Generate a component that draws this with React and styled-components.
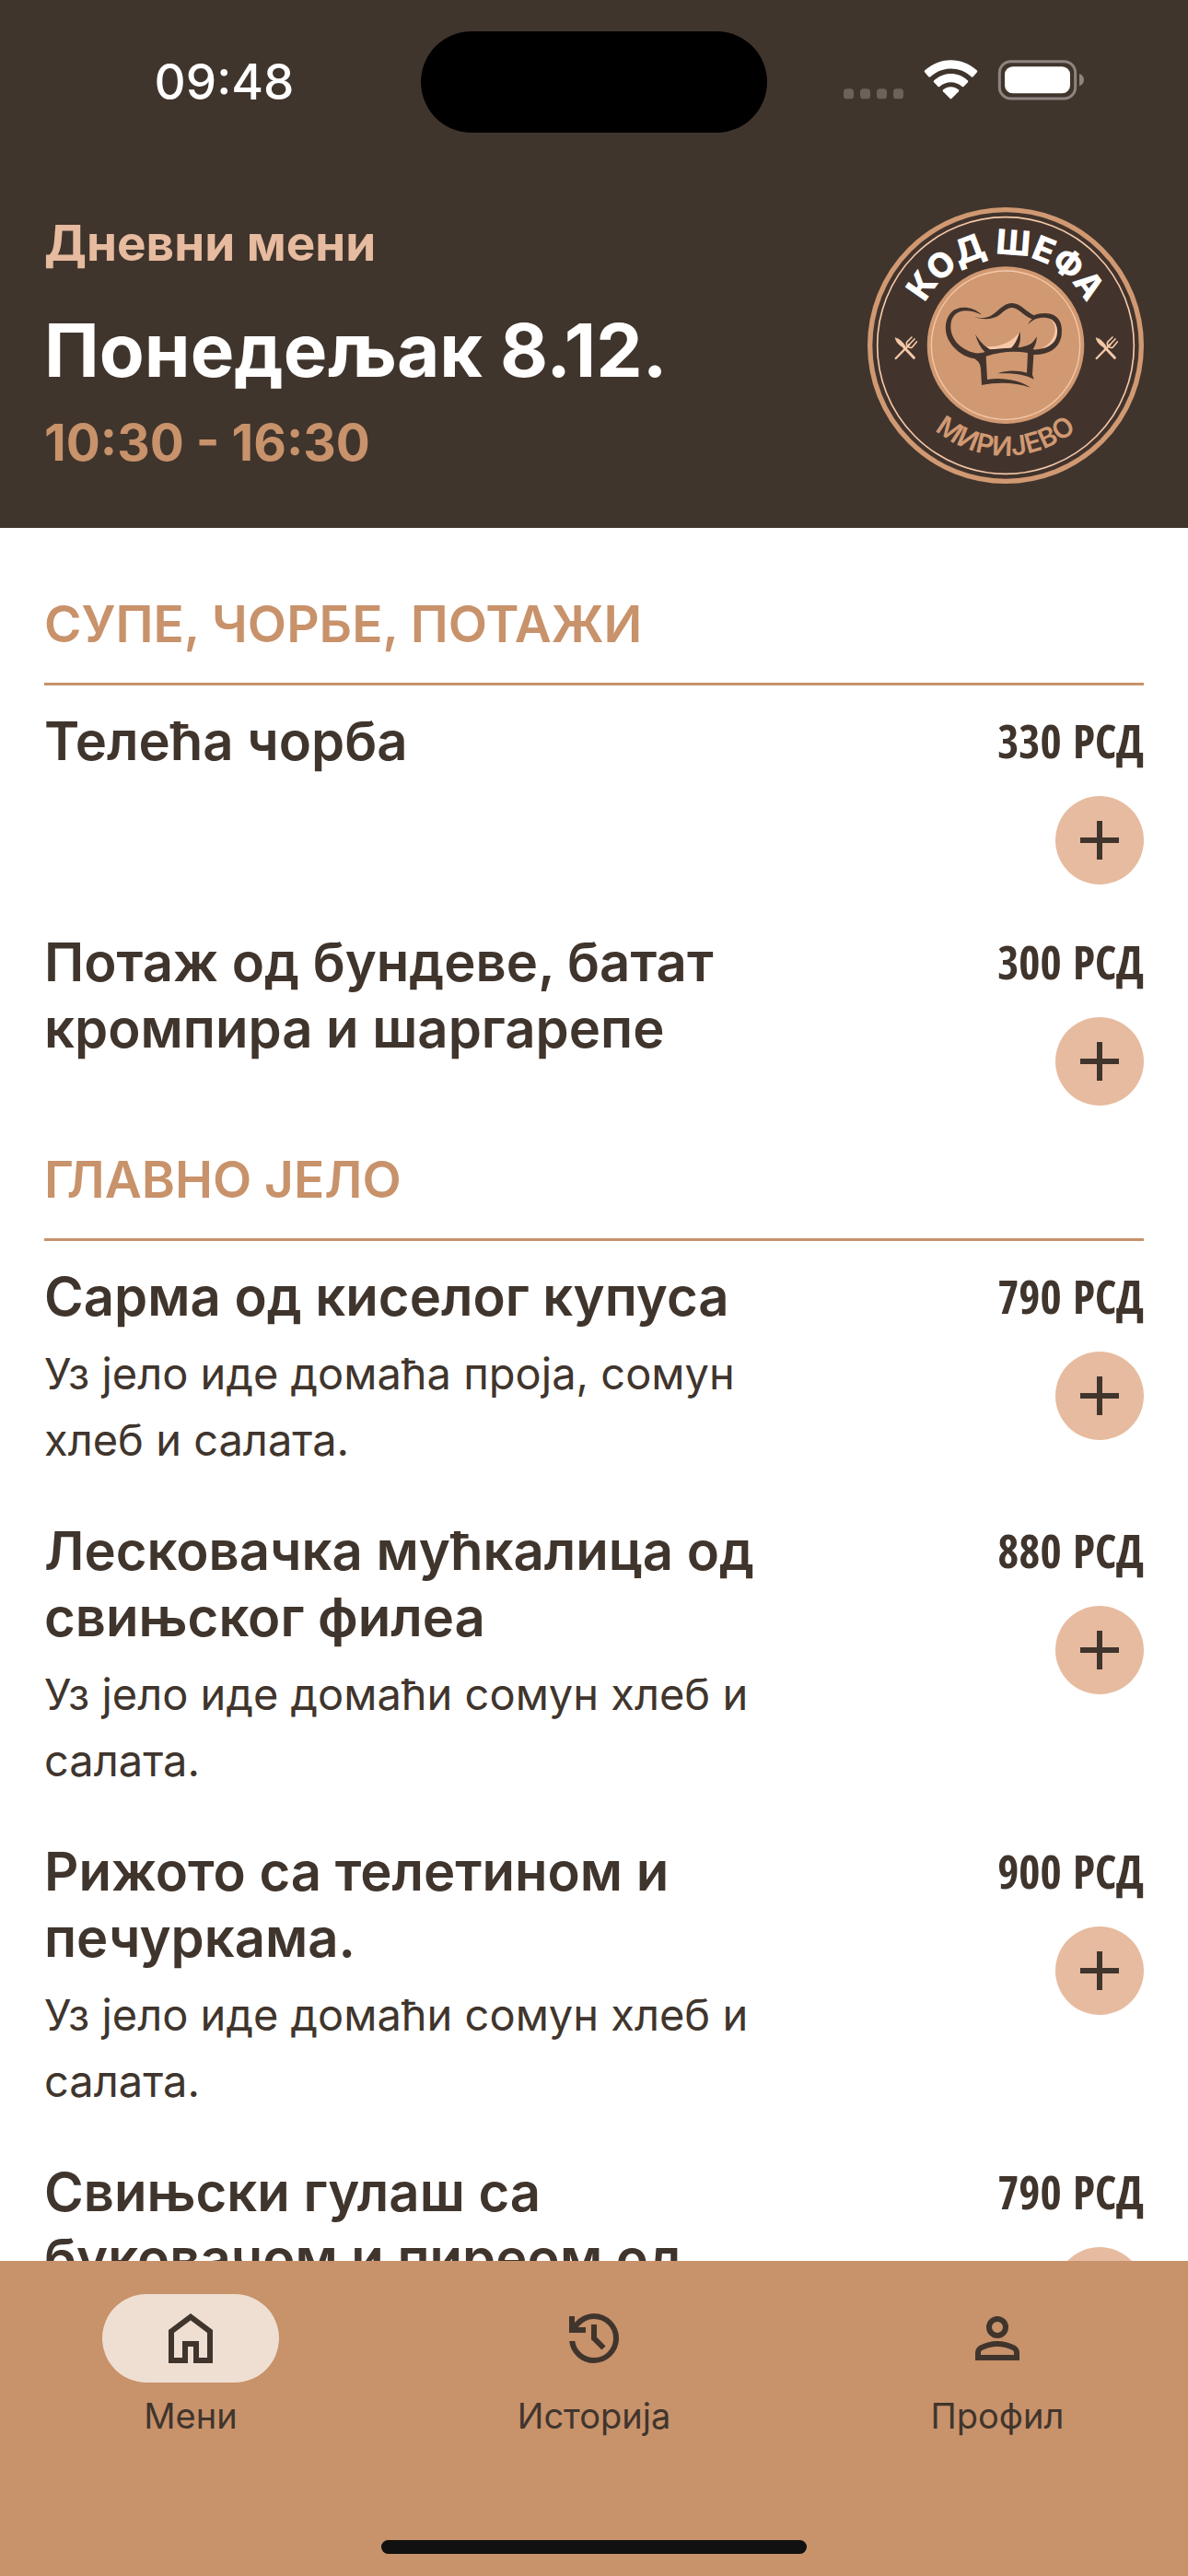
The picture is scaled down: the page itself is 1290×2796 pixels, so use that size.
import React from 'react'
import styled, { createGlobalStyle } from 'styled-components'

const BROWN = '#40352d'
const TAN = '#c8926b'
const PEACH = '#e7bb9f'
const CREAM = '#efdfd2'
const WHITE = '#ffffff'

const FONT = '"Inter", "Noto Sans", sans-serif'
const FONT_NARROW = '"Open Sans Condensed", "Roboto Condensed", "Liberation Sans Narrow", sans-serif'

const GlobalStyle = createGlobalStyle`
  *,
  *::before,
  *::after {
    box-sizing: border-box;
  }

  body {
    margin: 0;
    background: ${WHITE};
    color: ${BROWN};
    font-family: ${FONT};
  }

  h1, h2, h3, p, ul {
    margin: 0;
    padding: 0;
  }
`

const StyledScreen = styled('div')`
  display: flex;
  flex-direction: column;
  height: 100vh;
`

const StyledHeader = styled('header')`
  flex: none;
  background: ${BROWN};
`

const StyledStatusBar = styled('div')`
  display: grid;
  grid-template-columns: 1fr 376px 1fr;
  align-items: center;
  justify-items: center;
  padding-top: 34px;
  color: ${WHITE};
`

const StyledClock = styled('time')`
  padding-left: 30px;
  font-size: 53px;
  font-weight: 500;
  line-height: 72px;
`

const StyledIsland = styled('div')`
  width: 100%;
  height: 110px;
  border-radius: 55px;
  background: #000000;
`

const StyledStatusIcons = styled('svg')`
  width: 262px;
  height: 48px;
  margin: 0 30px 4px 0;
`

const StyledIntro = styled('div')`
  display: flex;
  align-items: center;
  justify-content: space-between;
  padding: 81px 48px 48px;
`

const StyledEyebrow = styled('p')`
  margin-bottom: 24px;
  color: ${PEACH};
  font-size: 53px;
  font-weight: 700;
  line-height: 72px;
`

const StyledDay = styled('h1')`
  margin-bottom: 8px;
  color: ${WHITE};
  font-size: 80px;
  font-weight: 700;
  line-height: 112px;
`

const StyledHours = styled('p')`
  margin-bottom: 6px;
  color: ${TAN};
  font-size: 55px;
  font-weight: 700;
  line-height: 72px;
`

const StyledLogo = styled('svg')`
  flex: none;
  width: 300px;
  height: 300px;
`

const StyledMain = styled('main')`
  flex: 1;
  min-height: 0;
  padding: 24px 48px 0;
  overflow-y: auto;
  scrollbar-width: none;
`

const StyledSectionTitle = styled('h2')`
  padding: 44px 0 28px;
  border-bottom: 3px solid ${TAN};
  color: ${TAN};
  font-size: 55px;
  font-weight: 600;
  line-height: 72px;
`

const StyledDishList = styled('ul')`
  display: flex;
  flex-direction: column;
  gap: 48px;
  padding-top: 24px;
  list-style: none;
`

const StyledDish = styled('li')`
  display: flex;
  align-items: flex-start;
  justify-content: space-between;
`

const StyledDishText = styled('div')`
  flex: 0 0 67%;
`

const StyledDishName = styled('h3')`
  font-size: 58px;
  font-weight: 600;
  line-height: 72px;
`

const StyledDishNote = styled('p')`
  margin-top: 12px;
  font-size: 47px;
  font-weight: 400;
  line-height: 72px;
`

const StyledDishSide = styled('div')`
  display: flex;
  flex-direction: column;
  align-items: flex-end;
  gap: 24px;
`

const StyledPrice = styled('span')`
  font-family: ${FONT_NARROW};
  font-size: 50px;
  font-weight: 600;
  line-height: 72px;
  white-space: nowrap;
`

const StyledAddButton = styled('button')`
  display: flex;
  align-items: center;
  justify-content: center;
  width: 96px;
  height: 96px;
  padding: 0;
  border: 0;
  border-radius: 50%;
  background: ${PEACH};
  color: ${BROWN};
`

const StyledIcon = styled('svg')`
  width: 72px;
  height: 72px;
  fill: currentColor;
`

const StyledNav = styled('nav')`
  flex: none;
  padding: 36px 0 24px;
  background: ${TAN};
`

const StyledTabs = styled('div')`
  display: grid;
  grid-template-columns: repeat(3, 1fr);
  gap: 24px;
`

const StyledTab = styled('button')`
  display: flex;
  flex-direction: column;
  align-items: center;
  gap: 12px;
  padding: 0;
  border: 0;
  background: none;
  color: ${BROWN};
  font-family: ${FONT};
  font-size: 38px;
  line-height: 48px;
`

const StyledTabIcon = styled('span')`
  display: flex;
  align-items: center;
  justify-content: center;
  width: 192px;
  height: 96px;
  border-radius: 48px;
  background: ${({ $active }) => ($active ? CREAM : 'transparent')};
`

const StyledHomeIndicator = styled('div')`
  width: 462px;
  height: 15px;
  margin: 111px auto 0;
  border-radius: 8px;
  background: #111111;
`

const ICONS = {
  add: 'M11 19v-6H5v-2h6V5h2v6h6v2h-6v6z',
  home: 'M6 19h3v-6h6v6h3v-9l-6-4.5L6 10zM4 21V9l8-6 8 6v12h-7v-6h-2v6z',
  history: 'M12 21q-3.45 0-6.0125-2.2875T3.05 13H5.1q.35 2.6 2.3125 4.3T12 19q2.925 0 4.9625-2.0375T19 12q0-2.925-2.0375-4.9625T12 5q-1.725 0-3.225.8T6.25 8H9v2H3V4h2v2.35q1.275-1.6 3.1125-2.475T12 3q1.875 0 3.5125.7125t2.85 1.925q1.2125 1.2125 1.925 2.85T21 12q0 1.875-.7125 3.5125t-1.925 2.85q-1.2125 1.2125-2.85 1.925T12 21Zm2.8-4.8L11 12.4V7h2v4.6l3.2 3.2-1.4 1.4Z',
  person: 'M12 12q-1.65 0-2.825-1.175T8 8q0-1.65 1.175-2.825T12 4q1.65 0 2.825 1.175T16 8q0 1.65-1.175 2.825T12 12Zm-8 8v-2.8q0-.85.4375-1.5625T5.6 14.55q1.55-.775 3.15-1.1625T12 13q1.65 0 3.25.3875t3.15 1.1625q.725.375 1.1625 1.0875T20 17.2V20H4Zm2-2h12v-.8q0-.275-.1375-.5T17.5 16.35q-1.35-.675-2.725-1.0125T12 15t-2.775.3375T6.5 16.35q-.225.125-.3625.35T6 17.2V18Zm6-8q.825 0 1.4125-.5875T14 8q0-.825-.5875-1.4125T12 6q-.825 0-1.4125.5875T10 8q0 .825.5875 1.4125T12 10Z',
}

const TABS = [
  { icon: 'home', label: 'Мени', active: true },
  { icon: 'history', label: 'Историја' },
  { icon: 'person', label: 'Профил' },
]

const SECTIONS = [
  {
    title: 'СУПЕ, ЧОРБЕ, ПОТАЖИ',
    dishes: [
      { name: 'Телећа чорба', price: 330 },
      { name: 'Потаж од бундеве, батат кромпира и шаргарепе', price: 300 },
    ],
  },
  {
    title: 'ГЛАВНО ЈЕЛО',
    dishes: [
      {
        name: 'Сарма од киселог купуса',
        note: 'Уз јело иде домаћа проја, сомун хлеб и салата.',
        price: 790,
      },
      {
        name: 'Лесковачка мућкалица од свињског филеа',
        note: 'Уз јело иде домаћи сомун хлеб и салата.',
        price: 880,
      },
      {
        name: 'Рижото са телетином и печуркама.',
        note: 'Уз јело иде домаћи сомун хлеб и салата.',
        price: 900,
      },
      { name: 'Свињски гулаш са буковачом и пиреом од', price: 790 },
    ],
  },
]

function Icon ({ name }) {
  return (
    <StyledIcon viewBox="0 0 24 24" aria-hidden="true">
      <path d={ICONS[name]} />
    </StyledIcon>
  )
}

function StatusIcons () {
  return (
    <StyledStatusIcons viewBox="48 38 786 144" aria-hidden="true">
      <g fill="#6b625c">
        <rect x="48" y="138" width="33" height="33" rx="11" />
        <rect x="102" y="138" width="33" height="33" rx="11" />
        <rect x="156" y="138" width="33" height="33" rx="11" />
        <rect x="210" y="138" width="33" height="33" rx="11" />
      </g>
      <g fill={WHITE}>
        <path d="M312 84Q310 81 313 78C362 34 433 34 482 78Q485 81 483 84L471 98Q467 102 463 98C426 64 369 64 332 98Q328 102 324 98Z" />
        <path d="M342 117Q340 114 343 111C375 82 420 82 452 111Q455 114 453 117L440 130Q437 133 433 130C413 112 382 112 362 130Q358 133 355 130Z" />
        <path d="M372 147Q370 144 373 141C387 129 408 129 422 141Q425 144 423 147L400 170Q397 172 395 170Z" />
      </g>
      <rect x="556" y="49" width="247" height="121" rx="37" fill="none" stroke="#8e8581" strokeWidth="9" />
      <rect x="573" y="66" width="213" height="87" rx="26" fill={WHITE} />
      <path d="M816 89C836 95 836 123 816 129Z" fill="#8e8581" />
    </StyledStatusIcons>
  )
}

function Cutlery () {
  return (
    <g fill="none" stroke="#f5c8a8" strokeLinecap="round">
      <path d="M-32 -32C-24 -32 -12 -24 0 -6L-6 -2C-20 -8 -30 -20 -32 -32Z" fill="#f5c8a8" strokeWidth="2" />
      <path d="M-4 -2L28 32" strokeWidth="9" />
      <path d="M-31 34L13 -11" strokeWidth="7" />
      <path d="M5 -19C1 -9 11 3 22 -2M5 -19L21 -35M13 -11L30 -29M22 -2L37 -20" strokeWidth="5" />
    </g>
  )
}

function ChefHat () {
  return (
    <g transform="translate(270 330)">
      <g fill="#f8c9a9">
        <path d="M155 168C190 172 232 158 260 124C256 150 250 164 242 172C210 176 180 178 162 176Z" />
        <path d="M268 170C290 166 304 156 315 142C312 158 306 168 300 172C288 174 276 174 268 170Z" />
        <path d="M358 77C392 96 380 158 328 176C366 176 388 150 386 112C384 90 374 80 358 77Z" />
      </g>
      <g fill="#42342d">
        <path d="M138 65C108 36 60 34 38 58C14 84 16 128 35 155C54 184 84 203 114 208C128 216 134 226 135 242L138 294C190 284 246 284 297 302C262 278 206 268 156 276L152 200C200 184 246 182 288 189L285 254C256 246 222 244 190 256C228 254 274 256 308 275L303 260L307 195C354 196 388 176 397 138C405 96 390 60 344 60C330 60 318 62 308 67C286 57 264 27 236 27C206 28 188 58 165 70C150 77 130 76 112 73C148 82 176 80 196 65C214 50 224 42 238 42C258 42 272 68 302 79C294 86 290 92 289 97C302 80 322 73 345 74C378 76 390 106 382 136C374 164 344 180 305 178C314 162 318 150 317 136C306 158 290 168 256 172C264 154 266 140 262 120C254 148 242 166 234 173C208 174 184 176 165 178C144 166 130 148 117 128C124 152 134 172 148 186C136 190 126 191 118 190C70 180 36 144 37 102C38 54 80 38 138 65Z" />
      </g>
    </g>
  )
}

function Logo () {
  return (
    <StyledLogo viewBox="36 45 900 900" role="img" aria-label="Код шефа Миријево">
      <defs>
        <path id="logo-top" d="M190 495A296 296 0 0 1 782 495" />
        <path id="logo-bottom" d="M127 495A359 359 0 0 0 845 495" />
      </defs>
      <circle cx="486" cy="495" r="442" fill="#42342d" stroke="#d19972" strokeWidth="16" />
      <circle cx="486" cy="495" r="418" fill="none" stroke="#f5c8a8" strokeWidth="5" />
      <circle cx="486" cy="494" r="256" fill="#d19972" />
      <circle cx="486" cy="494" r="242" fill="none" stroke="#f5c8a8" strokeWidth="4" />
      <text fill={WHITE} fontFamily="Inter, sans-serif" fontSize="112" fontWeight="800" textAnchor="middle">
        <textPath href="#logo-top" startOffset="50%">КОД ШЕФА</textPath>
      </text>
      <text fill="#d19972" fontFamily="Inter, sans-serif" fontSize="88" fontWeight="600" textAnchor="middle">
        <textPath href="#logo-bottom" startOffset="50%">МИРИЈЕВО</textPath>
      </text>
      <g transform="translate(159 503)"><Cutlery /></g>
      <g transform="translate(813 503)"><Cutlery /></g>
      <ChefHat />
    </StyledLogo>
  )
}

function Dish ({ name, note, price }) {
  return (
    <StyledDish>
      <StyledDishText>
        <StyledDishName>{name}</StyledDishName>
        {note && <StyledDishNote>{note}</StyledDishNote>}
      </StyledDishText>
      <StyledDishSide>
        <StyledPrice>{`${price} РСД`}</StyledPrice>
        <StyledAddButton type="button" aria-label={`Додај: ${name}`}>
          <Icon name="add" />
        </StyledAddButton>
      </StyledDishSide>
    </StyledDish>
  )
}

function App () {
  return (
    <StyledScreen>
      <GlobalStyle />
      <StyledHeader>
        <StyledStatusBar>
          <StyledClock>09:48</StyledClock>
          <StyledIsland />
          <StatusIcons />
        </StyledStatusBar>
        <StyledIntro>
          <div>
            <StyledEyebrow>Дневни мени</StyledEyebrow>
            <StyledDay>Понедељак 8.12.</StyledDay>
            <StyledHours>10:30 - 16:30</StyledHours>
          </div>
          <Logo />
        </StyledIntro>
      </StyledHeader>
      <StyledMain>
        {SECTIONS.map(({ title, dishes }) => (
          <section key={title}>
            <StyledSectionTitle>{title}</StyledSectionTitle>
            <StyledDishList>
              {dishes.map((dish) => <Dish key={dish.name} {...dish} />)}
            </StyledDishList>
          </section>
        ))}
      </StyledMain>
      <StyledNav>
        <StyledTabs>
          {TABS.map(({ icon, label, active }) => (
            <StyledTab key={label} type="button" aria-current={active ? 'page' : undefined}>
              <StyledTabIcon $active={active}>
                <Icon name={icon} />
              </StyledTabIcon>
              {label}
            </StyledTab>
          ))}
        </StyledTabs>
        <StyledHomeIndicator />
      </StyledNav>
    </StyledScreen>
  )
}

export default App
